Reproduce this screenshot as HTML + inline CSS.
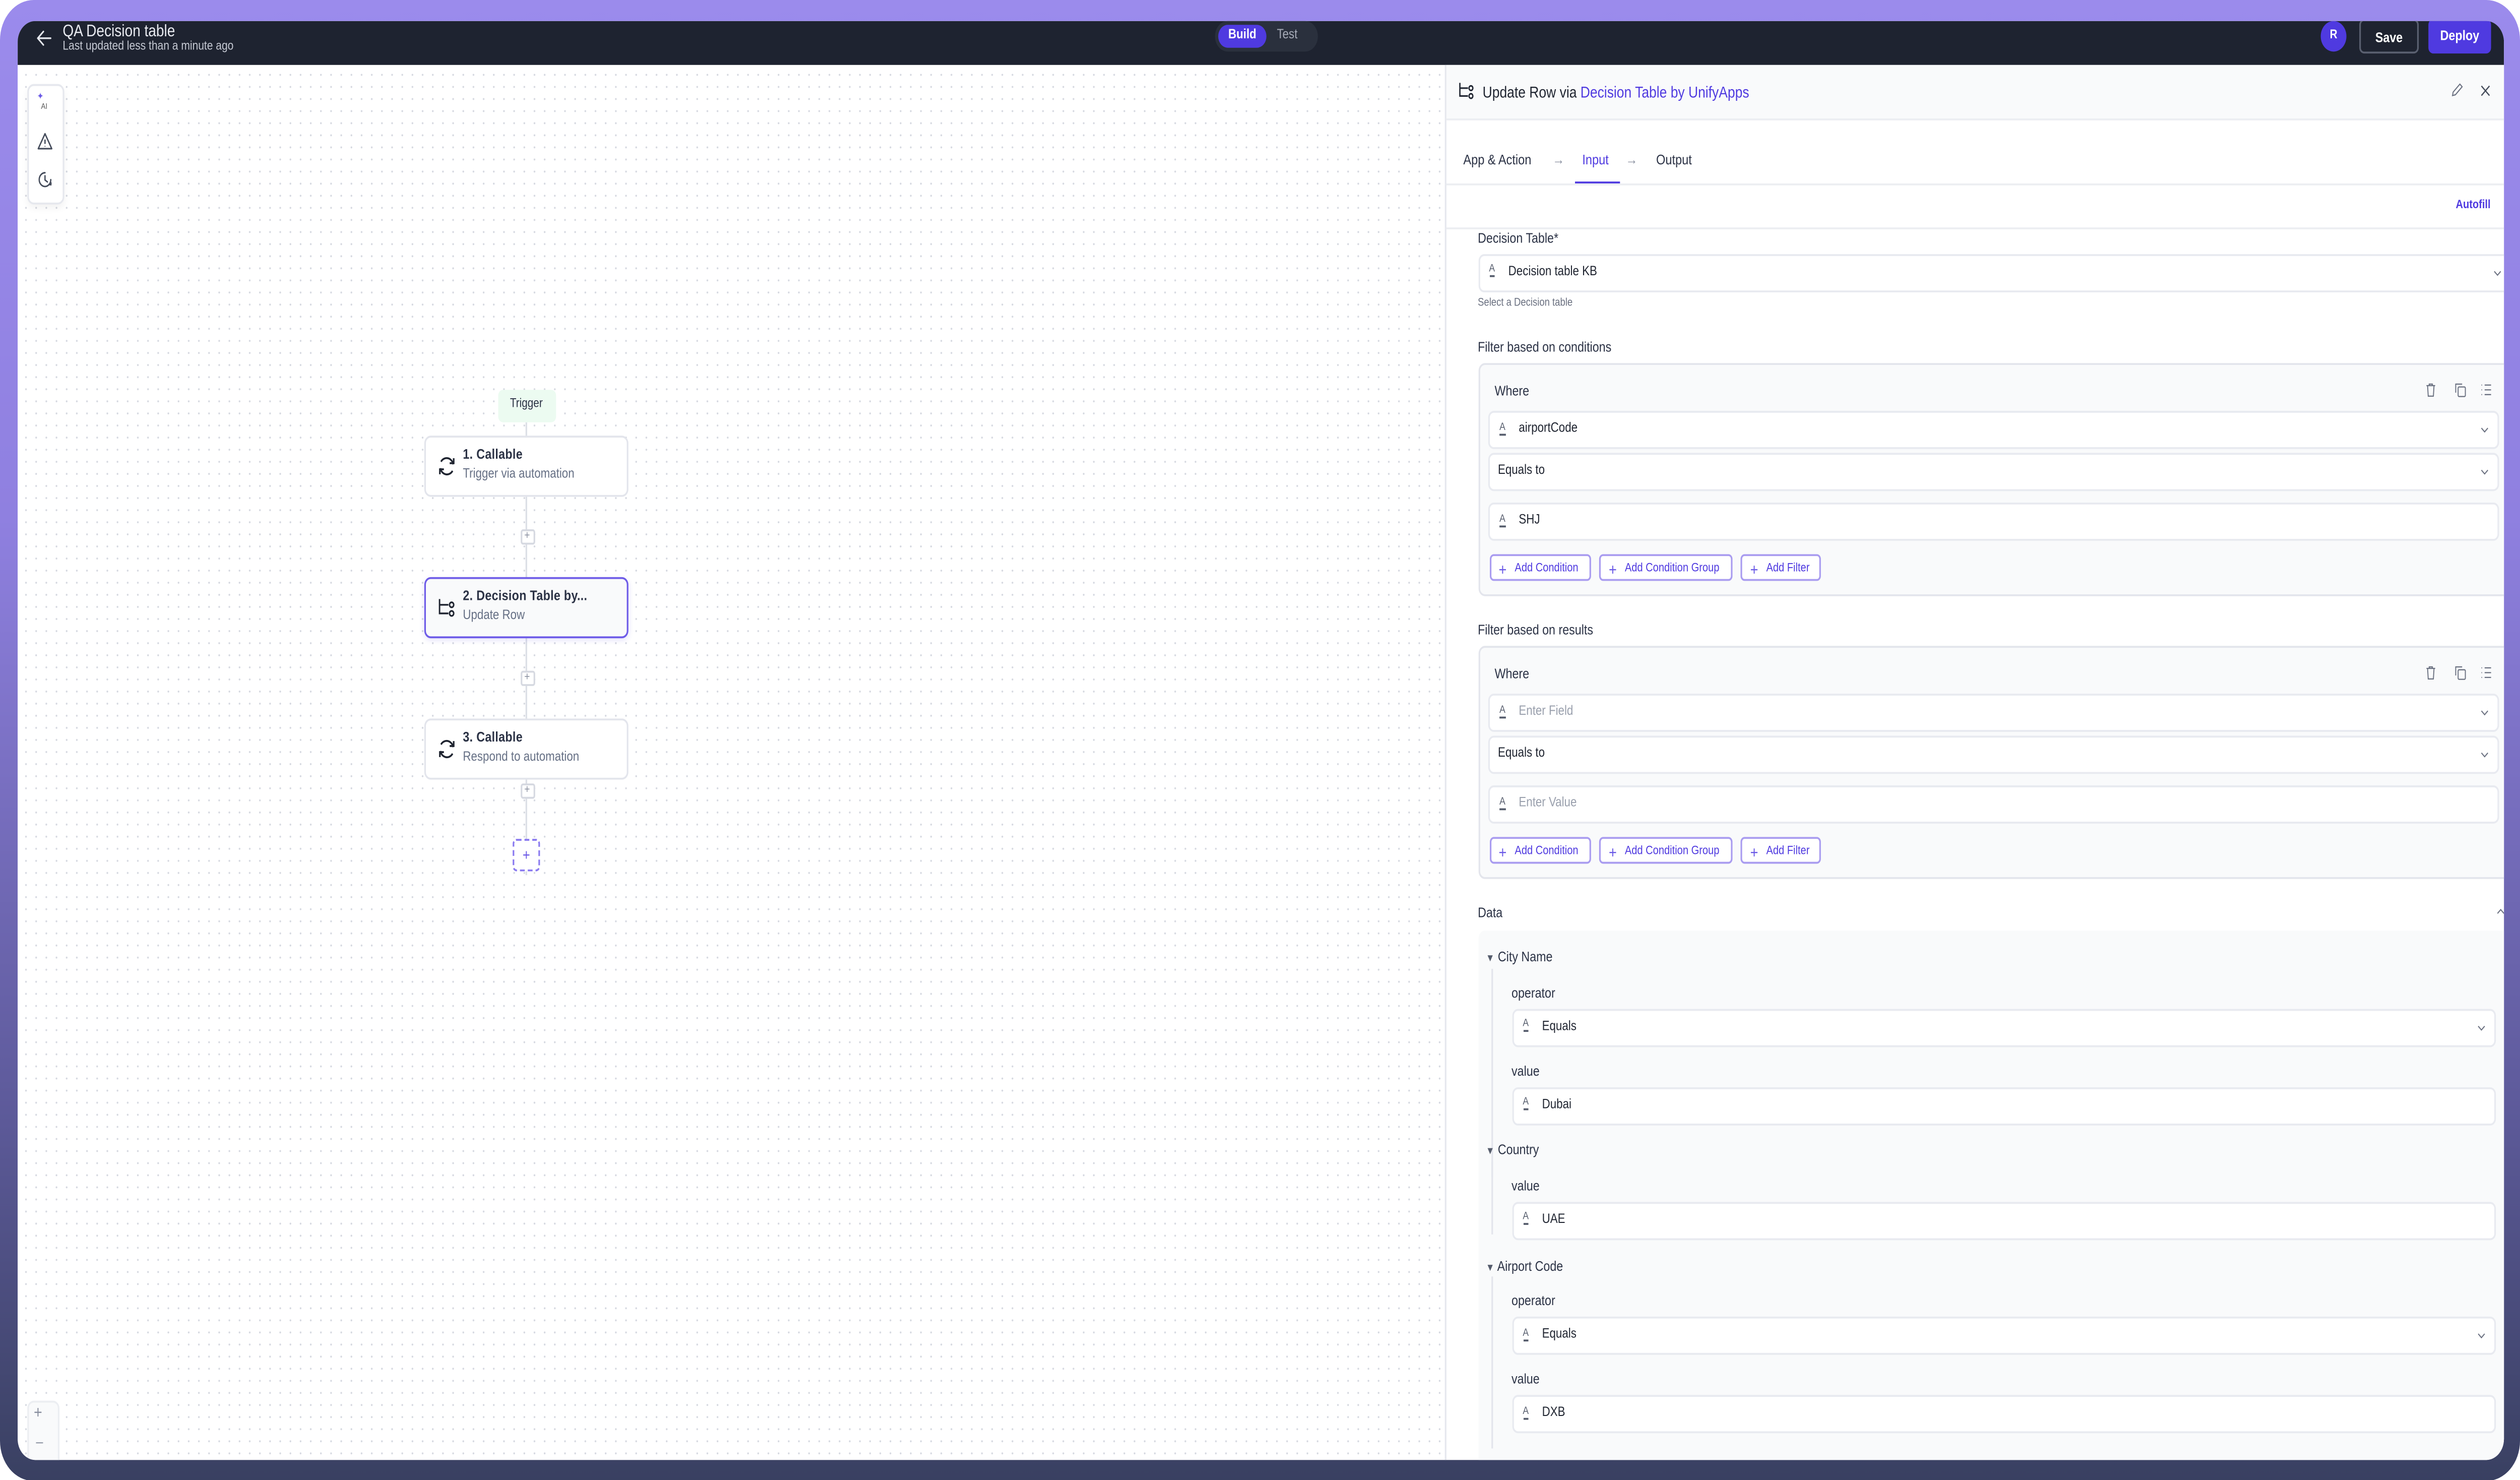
<!DOCTYPE html>
<html><head><meta charset="utf-8">
<style>
html,body{margin:0;padding:0;width:100%;height:100%;overflow:hidden;background:#fff;}
svg.wrap{position:absolute;left:0;top:0;width:100vw;height:100vh;display:block;}
#root{position:relative;width:1568px;height:774.5px;font-family:"Liberation Sans",sans-serif;color:#1f2430;}
.bg{position:absolute;left:0;top:0;width:1568px;height:774.5px;border-radius:21px;background:linear-gradient(180deg,#9b8bec 0%,#8f80e0 35%,#5d5a9a 75%,#394061 100%);}
.win{position:absolute;left:10.5px;top:10.5px;width:1547px;height:753.5px;border-radius:11px;overflow:hidden;background:#fff;}
.hdr{position:absolute;left:0;top:0;width:100%;height:23.5px;background:#1e2330;}
.abs{position:absolute;}
.canvas{position:absolute;left:0;top:23.5px;width:888.5px;height:730px;background-color:#fff;background-image:radial-gradient(circle,#d5d8e0 0.45px,transparent 0.6px);background-size:6.33px 6.33px;background-position:2px 2px;}
.panel{position:absolute;left:888.5px;top:23.5px;width:658.5px;height:730px;background:#fff;border-left:1px solid #e6e8ee;}
.node{position:absolute;left:253.5px;width:125px;height:30px;border:1px solid #e3e5ec;border-radius:4px;background:#fff;}
.node .t{position:absolute;left:23px;top:4.5px;font-size:7.3px;font-weight:bold;color:#2b3245;letter-spacing:.1px;}
.node .s{position:absolute;left:23px;top:16px;font-size:7px;color:#667085;}
.node svg{position:absolute;left:7px;top:9px;}
.plus{position:absolute;left:313px;width:7px;height:6px;border:0.6px solid #d6d9e1;border-radius:1.5px;background:#fff;font-size:6px;line-height:6px;text-align:center;color:#8a90a0;}
.lbl{position:absolute;font-size:7.3px;color:#2b3245;}
.fld{position:absolute;background:#fff;border:0.7px solid #e8eaf0;border-radius:3.5px;height:18px;}
.fld .tx{position:absolute;left:18px;top:5px;font-size:7px;color:#1f2430;}
.fld .ph{color:#9aa0ad;}
.fld .ai{position:absolute;left:6px;top:4.5px;font-size:5.5px;color:#555c6c;border-bottom:0.6px solid #555c6c;line-height:6px;}
.chev{position:absolute;right:5px;top:6px;}
.grp{position:absolute;left:19.5px;width:641px;background:#f9fafb;border:0.7px solid #e3e5ec;border-radius:4px;}
.btn{position:absolute;height:14px;border:0.7px solid #a99cf0;border-radius:2.5px;background:#fff;font-size:6.3px;color:#4f3ae0;line-height:14px;padding-left:15px;box-sizing:border-box;}
.btn:before{content:"+";position:absolute;left:5px;top:-0.5px;font-size:8.5px;color:#6b5ae6;}
</style></head><body>
<svg class="wrap" viewBox="0 0 1568 774.5" preserveAspectRatio="none" xmlns="http://www.w3.org/2000/svg">
<foreignObject x="0" y="0" width="1568" height="774.5">
<div xmlns="http://www.w3.org/1999/xhtml" id="root">
<div class="bg"></div>
<div class="win">
  <div class="hdr">
    <svg class="abs" style="left:11px;top:4px" width="11" height="10" viewBox="0 0 11 10"><path d="M9.5 5H1.5M5 1.5L1.5 5L5 8.5" stroke="#e6e8ee" stroke-width="0.9" fill="none" stroke-linecap="round" stroke-linejoin="round"/></svg>
    <div class="abs" style="left:28.5px;top:0px;font-size:8.8px;color:#e8eaf0;">QA Decision table</div>
    <div class="abs" style="left:28.5px;top:10px;font-size:6.6px;color:#c5c9d3;">Last updated less than a minute ago</div>
    <div class="abs" style="left:745px;top:0.5px;width:64px;height:16px;border-radius:8px;background:#2a303d;"></div>
    <div class="abs" style="left:747.5px;top:2.5px;width:30px;height:12px;border-radius:6px;background:#4f3ae0;color:#fff;font-size:7px;font-weight:bold;text-align:center;line-height:12px;">Build</div>
    <div class="abs" style="left:784px;top:2.5px;font-size:7px;color:#a6abb8;line-height:12px;">Test</div>
    <div class="abs" style="left:1433.5px;top:0.5px;width:16px;height:16px;border-radius:8px;background:#4f3ae0;color:#fff;font-size:6.5px;font-weight:bold;text-align:center;line-height:16px;">R</div>
    <div class="abs" style="left:1457.5px;top:-0.5px;width:37px;height:18px;border:0.7px solid #5a6070;border-radius:3px;color:#fff;font-size:7.3px;font-weight:bold;text-align:center;line-height:18px;box-sizing:border-box;">Save</div>
    <div class="abs" style="left:1500.5px;top:-0.5px;width:39px;height:18px;border-radius:3px;background:#4f3ae0;color:#fff;font-size:7.3px;font-weight:bold;text-align:center;line-height:18px;">Deploy</div>
  </div>
  <div class="canvas">
    <div class="abs" style="left:6.5px;top:10px;width:21px;height:61px;background:#fff;border:0.7px solid #e6e8ee;border-radius:4px;box-shadow:0 2px 4px rgba(0,0,0,.05);"></div>
    <div class="abs" style="left:12.5px;top:15px;font-size:5px;color:#6b5ae6;line-height:5px;">✦</div>
    <div class="abs" style="left:15px;top:19px;font-size:4.2px;color:#555;">AI</div>
    <svg class="abs" style="left:12px;top:35px" width="10" height="10" viewBox="0 0 10 10"><path d="M5 1L9.2 8.8H0.8Z" fill="none" stroke="#444b5a" stroke-width="0.8" stroke-linejoin="round"/><path d="M5 4v2.3M5 7.4v.3" stroke="#444b5a" stroke-width="0.8"/></svg>
    <svg class="abs" style="left:12px;top:55px" width="10" height="10" viewBox="0 0 10 10"><path d="M8.6 5A3.6 3.6 0 1 1 5 1.4M5 3v2.2l1.5 1" fill="none" stroke="#444b5a" stroke-width="0.8" stroke-linecap="round"/><path d="M7.3 7.6l1.4.1.1-1.3" fill="none" stroke="#444b5a" stroke-width="0.7"/></svg>
    <div class="abs" style="left:6.5px;top:699px;width:18px;height:40px;background:#f9fafb;border:0.7px solid #eceef2;border-radius:4px;"></div>
    <div class="abs" style="left:10.5px;top:700px;font-size:9px;color:#8a90a0;">+</div>
    <div class="abs" style="left:11.5px;top:716px;font-size:9px;color:#9aa0ad;">−</div>

    <div class="abs" style="left:316.5px;top:187px;width:1px;height:237px;background:#dcdfe6;"></div>
    <div class="abs" style="left:299px;top:170px;width:36px;height:16.5px;border-radius:3px;background:#ecfbf1;font-size:6.5px;color:#2b3245;text-align:center;line-height:16.5px;">Trigger</div>
    <div class="node" style="top:193.5px;">
      <svg width="12" height="12" viewBox="0 0 12 12"><path d="M10 5A4.2 4.2 0 0 0 2.4 3.6M2 7a4.2 4.2 0 0 0 7.6 1.4" fill="none" stroke="#1f2430" stroke-width="1"/><path d="M10.3 1.8v2.6H7.8M1.7 10.2V7.6h2.5" fill="none" stroke="#1f2430" stroke-width="1"/></svg>
      <div class="t">1. Callable</div><div class="s">Trigger via automation</div></div>
    <div class="plus" style="top:242.5px;">+</div>
    <div class="node" style="top:267.5px;border:1px solid #6e5ce8;background:#f9fafb;box-shadow:0 1px 3px rgba(79,58,224,.15);">
      <svg width="12" height="12" viewBox="0 0 12 12"><path d="M1.5 1.5v7.5h5.5M1.5 4.5h5.5" fill="none" stroke="#1f2430" stroke-width="0.9"/><circle cx="9" cy="4.5" r="1.3" fill="none" stroke="#1f2430" stroke-width="0.9"/><circle cx="9" cy="9" r="1.3" fill="none" stroke="#1f2430" stroke-width="0.9"/></svg>
      <div class="t">2. Decision Table by...</div><div class="s">Update Row</div></div>
    <div class="plus" style="top:316.5px;">+</div>
    <div class="node" style="top:341.5px;">
      <svg width="12" height="12" viewBox="0 0 12 12"><path d="M10 5A4.2 4.2 0 0 0 2.4 3.6M2 7a4.2 4.2 0 0 0 7.6 1.4" fill="none" stroke="#1f2430" stroke-width="1"/><path d="M10.3 1.8v2.6H7.8M1.7 10.2V7.6h2.5" fill="none" stroke="#1f2430" stroke-width="1"/></svg>
      <div class="t">3. Callable</div><div class="s">Respond to automation</div></div>
    <div class="plus" style="top:375.5px;">+</div>
    <div class="abs" style="left:308.5px;top:404.5px;width:15px;height:15px;border:0.8px dashed #8a7af0;border-radius:2.5px;background:#fff;font-size:8px;color:#6b5ae6;text-align:center;line-height:15px;">+</div>
  </div>

  <div class="panel">
    <div class="abs" style="left:0;top:0;width:100%;height:28px;background:#f9fafb;border-bottom:0.7px solid #eceef2;"></div>
    <svg class="abs" style="left:7px;top:8px" width="11" height="11" viewBox="0 0 12 12"><path d="M1.5 1.5v7.5h5.5M1.5 4.5h5.5" fill="none" stroke="#1f2430" stroke-width="0.9"/><circle cx="9" cy="4.5" r="1.3" fill="none" stroke="#1f2430" stroke-width="0.9"/><circle cx="9" cy="9" r="1.3" fill="none" stroke="#1f2430" stroke-width="0.9"/></svg>
    <div class="abs" style="left:22.5px;top:8.5px;font-size:8.3px;color:#1f2430;">Update Row via <span style="color:#4f3ae0">Decision Table by UnifyApps</span></div>
    <svg class="abs" style="left:625px;top:9px" width="8" height="8" viewBox="0 0 8 8"><path d="M1 7l.4-1.8L5.6 1l1.4 1.4L2.8 6.6Z" fill="none" stroke="#6a7080" stroke-width="0.6"/></svg>
    <svg class="abs" style="left:643px;top:9.5px" width="7" height="7" viewBox="0 0 7 7"><path d="M1 1l5 5M6 1L1 6" stroke="#444b5a" stroke-width="0.7"/></svg>
    <div class="abs" style="left:10.5px;top:45px;font-size:7.4px;color:#2b3245;">App &amp; Action</div>
    <div class="abs" style="left:66px;top:44.5px;font-size:7.5px;color:#8a90a0;">→</div>
    <div class="abs" style="left:84.5px;top:45px;font-size:7.4px;color:#4f3ae0;">Input</div>
    <div class="abs" style="left:79.5px;top:61px;width:28px;height:1.2px;background:#4f3ae0;"></div>
    <div class="abs" style="left:111.5px;top:44.5px;font-size:7.5px;color:#8a90a0;">→</div>
    <div class="abs" style="left:130.5px;top:45px;font-size:7.4px;color:#2b3245;">Output</div>
    <div class="abs" style="left:0;top:62px;width:100%;height:0.7px;background:#eceef2;"></div>
    <div class="abs" style="left:628px;top:69.5px;font-size:6.3px;font-weight:bold;color:#4f3ae0;">Autofill</div>
    <div class="abs" style="left:0;top:85px;width:100%;height:0.7px;background:#eceef2;"></div>

    <div class="lbl" style="left:19.5px;top:86px;">Decision Table*</div>
    <div class="fld" style="left:19.5px;top:98.5px;width:641px;"><span class="ai">A</span><span class="tx">Decision table KB</span><svg class="chev" width="6" height="6" viewBox="0 0 6 6"><path d="M1 2l2 2 2-2" fill="none" stroke="#6a7080" stroke-width="0.6"/></svg></div>
    <div class="abs" style="left:19.5px;top:122px;font-size:5.8px;color:#6a7080;">Select a Decision table</div>

    <div class="lbl" style="left:19.5px;top:142.5px;">Filter based on conditions</div>
    <div class="grp" style="top:156px;height:120px;">
      <div class="lbl" style="left:9.5px;top:8.5px;">Where</div>
      <svg class="abs" style="left:588px;top:9px" width="7" height="8" viewBox="0 0 7 8"><path d="M0.8 1.8h5.4M2.5 1.8V1h2v.8M1.5 1.8l.4 5.5h3.2l.4-5.5" fill="none" stroke="#6a7080" stroke-width="0.6"/></svg>
      <svg class="abs" style="left:606px;top:9px" width="8" height="8" viewBox="0 0 8 8"><rect x="2.5" y="2.5" width="4.5" height="5" rx=".6" fill="none" stroke="#6a7080" stroke-width="0.6"/><path d="M1 5.5V1h4" fill="none" stroke="#6a7080" stroke-width="0.6"/></svg>
      <svg class="abs" style="left:622px;top:9px" width="8" height="8" viewBox="0 0 8 8"><path d="M1 1.5h.4M1 4h.4M1 6.5h.4M3 1.5h4M3 4h4M3 6.5h4" stroke="#6a7080" stroke-width="0.6"/></svg>
      <div class="fld" style="left:5.5px;top:24px;width:627px;"><span class="ai">A</span><span class="tx">airportCode</span><svg class="chev" width="6" height="6" viewBox="0 0 6 6"><path d="M1 2l2 2 2-2" fill="none" stroke="#6a7080" stroke-width="0.6"/></svg></div>
      <div class="fld" style="left:5.5px;top:46px;width:627px;"><span class="tx" style="left:5px">Equals to</span><svg class="chev" width="6" height="6" viewBox="0 0 6 6"><path d="M1 2l2 2 2-2" fill="none" stroke="#6a7080" stroke-width="0.6"/></svg></div>
      <div class="fld" style="left:5.5px;top:72px;width:627px;"><span class="ai">A</span><span class="tx">SHJ</span></div>
      <div class="btn" style="left:6px;top:99px;width:63px;">Add Condition</div>
      <div class="btn" style="left:74.5px;top:99px;width:83px;">Add Condition Group</div>
      <div class="btn" style="left:162.5px;top:99px;width:50px;">Add Filter</div>
    </div>

    <div class="lbl" style="left:19.5px;top:290.5px;">Filter based on results</div>
    <div class="grp" style="top:304px;height:120px;">
      <div class="lbl" style="left:9.5px;top:8.5px;">Where</div>
      <svg class="abs" style="left:588px;top:9px" width="7" height="8" viewBox="0 0 7 8"><path d="M0.8 1.8h5.4M2.5 1.8V1h2v.8M1.5 1.8l.4 5.5h3.2l.4-5.5" fill="none" stroke="#6a7080" stroke-width="0.6"/></svg>
      <svg class="abs" style="left:606px;top:9px" width="8" height="8" viewBox="0 0 8 8"><rect x="2.5" y="2.5" width="4.5" height="5" rx=".6" fill="none" stroke="#6a7080" stroke-width="0.6"/><path d="M1 5.5V1h4" fill="none" stroke="#6a7080" stroke-width="0.6"/></svg>
      <svg class="abs" style="left:622px;top:9px" width="8" height="8" viewBox="0 0 8 8"><path d="M1 1.5h.4M1 4h.4M1 6.5h.4M3 1.5h4M3 4h4M3 6.5h4" stroke="#6a7080" stroke-width="0.6"/></svg>
      <div class="fld" style="left:5.5px;top:24px;width:627px;"><span class="ai">A</span><span class="tx ph">Enter Field</span><svg class="chev" width="6" height="6" viewBox="0 0 6 6"><path d="M1 2l2 2 2-2" fill="none" stroke="#6a7080" stroke-width="0.6"/></svg></div>
      <div class="fld" style="left:5.5px;top:46px;width:627px;"><span class="tx" style="left:5px">Equals to</span><svg class="chev" width="6" height="6" viewBox="0 0 6 6"><path d="M1 2l2 2 2-2" fill="none" stroke="#6a7080" stroke-width="0.6"/></svg></div>
      <div class="fld" style="left:5.5px;top:72px;width:627px;"><span class="ai">A</span><span class="tx ph">Enter Value</span></div>
      <div class="btn" style="left:6px;top:99px;width:63px;">Add Condition</div>
      <div class="btn" style="left:74.5px;top:99px;width:83px;">Add Condition Group</div>
      <div class="btn" style="left:162.5px;top:99px;width:50px;">Add Filter</div>
    </div>

    <div class="lbl" style="left:19.5px;top:438.5px;">Data</div>
    <svg class="abs" style="left:653px;top:440px" width="6" height="6" viewBox="0 0 6 6"><path d="M1 4l2-2 2 2" fill="none" stroke="#6a7080" stroke-width="0.6"/></svg>
    <div class="abs" style="left:19.5px;top:452.5px;width:641px;height:281px;background:#f9fafb;border-radius:4px;">
      <div class="lbl" style="left:5px;top:9.5px;"><span style="font-size:5.5px;color:#555c6c">▼</span> City Name</div>
      <div class="abs" style="left:8.5px;top:20px;width:0.6px;height:109px;background:#e3e5ec;"></div>
      <div class="lbl" style="left:21px;top:28px;">operator</div>
      <div class="fld" style="left:21px;top:41px;width:610px;"><span class="ai">A</span><span class="tx">Equals</span><svg class="chev" width="6" height="6" viewBox="0 0 6 6"><path d="M1 2l2 2 2-2" fill="none" stroke="#6a7080" stroke-width="0.6"/></svg></div>
      <div class="lbl" style="left:21px;top:69px;">value</div>
      <div class="fld" style="left:21px;top:82px;width:610px;"><span class="ai">A</span><span class="tx">Dubai</span></div>
      <div class="lbl" style="left:5px;top:110.5px;"><span style="font-size:5.5px;color:#555c6c">▼</span> Country</div>
      <div class="abs" style="left:8.5px;top:121px;width:0.6px;height:38px;background:#e3e5ec;"></div>
      <div class="lbl" style="left:21px;top:129px;">value</div>
      <div class="fld" style="left:21px;top:142px;width:610px;"><span class="ai">A</span><span class="tx">UAE</span></div>
      <div class="lbl" style="left:5px;top:171px;"><span style="font-size:5.5px;color:#555c6c">▼</span> Airport Code</div>
      <div class="abs" style="left:8.5px;top:181px;width:0.6px;height:90px;background:#e3e5ec;"></div>
      <div class="lbl" style="left:21px;top:189.5px;">operator</div>
      <div class="fld" style="left:21px;top:202.5px;width:610px;"><span class="ai">A</span><span class="tx">Equals</span><svg class="chev" width="6" height="6" viewBox="0 0 6 6"><path d="M1 2l2 2 2-2" fill="none" stroke="#6a7080" stroke-width="0.6"/></svg></div>
      <div class="lbl" style="left:21px;top:230.5px;">value</div>
      <div class="fld" style="left:21px;top:243.5px;width:610px;"><span class="ai">A</span><span class="tx">DXB</span></div>
    </div>
    <div class="abs" style="left:0;top:736px;width:100%;height:0.7px;background:#e6e8ee;"></div>
  </div>
</div>
</div>
</foreignObject>
</svg>
</body></html>
